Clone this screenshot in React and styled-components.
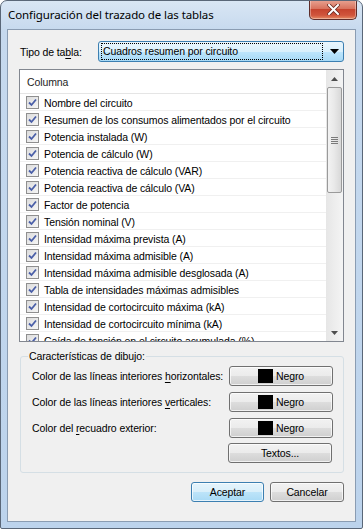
import React from 'react'
import styled, { createGlobalStyle } from 'styled-components'

const GlobalStyle = createGlobalStyle`
    html, body {
        margin: 0;
        padding: 0;
        background: #ffffff;
    }

    body {
        font-family: "Liberation Sans", Arial, sans-serif;
        font-size: 10.5px;
        letter-spacing: -0.1px;
        color: #000000;
    }
`

const Window = styled.div`
    box-sizing: border-box;
    width: 363px;
    height: 529px;
    display: flex;
    flex-direction: column;
    border: 1px solid #5a6778;
    border-radius: 7px 7px 2px 2px;
    background: linear-gradient(180deg, #d9e6f4 0%, #c6d9ee 30px, #bcd3ec 100%);
    overflow: hidden;
`

const TitleBar = styled.div`
    height: 28px;
    flex-shrink: 0;
    display: flex;
    align-items: flex-start;
    justify-content: space-between;
    padding-left: 7px;
    padding-right: 5px;
`

const Title = styled.div`
    font-family: "Noto Sans", "Open Sans", sans-serif;
    font-size: 11.5px;
    letter-spacing: -0.1px;
    line-height: 27px;
    color: #000000;
`

const CloseButton = styled.div`
    width: 46px;
    height: 19px;
    margin-top: -1px;
    border: 1px solid #5e2d2a;
    border-top: none;
    border-radius: 0 0 5px 5px;
    background: linear-gradient(180deg, #e8a493 0%, #d8735e 45%, #c6442e 50%, #d0553c 80%, #e58a63 100%);
    box-shadow: inset 0 0 0 1px rgba(255, 255, 255, 0.35);
    display: flex;
    align-items: center;
    justify-content: center;
`

const Client = styled.div`
    flex: 1;
    margin: 0 6px 6px 6px;
    border: 1px solid #8a9cb2;
    background: #f0f0f0;
    display: flex;
    flex-direction: column;
    padding: 11px 11px 0 11px;
`

const TypeRow = styled.div`
    display: flex;
    align-items: center;
    height: 21px;
    padding-left: 1px;
`

const Label = styled.span`
    width: 78px;
    white-space: nowrap;
`

const Combo = styled.div`
    flex: 1;
    height: 21px;
    box-sizing: border-box;
    border: 1px solid #3c7fb1;
    border-radius: 3px;
    background: linear-gradient(180deg, #eaf6fd 0%, #d9f0fc 50%, #bee6fd 51%, #a7d9f5 100%);
    display: flex;
    align-items: center;
    padding: 0 2px;
`

const ComboText = styled.div`
    flex: 1;
    height: 15px;
    line-height: 15px;
    border: 1px dotted #000000;
    padding-left: 1px;
    margin-right: 4px;
`

const ComboArrow = styled.div`
    width: 14px;
    display: flex;
    justify-content: center;
`

const ListBox = styled.div`
    margin-top: 7px;
    height: 273px;
    flex-shrink: 0;
    box-sizing: border-box;
    border: 1px solid #828790;
    background: #ffffff;
    display: flex;
    overflow: hidden;
`

const ListBody = styled.div`
    flex: 1;
    display: flex;
    flex-direction: column;
    overflow: hidden;
`

const Header = styled.div`
    height: 23px;
    flex-shrink: 0;
    line-height: 25px;
    padding-left: 7px;
    border-bottom: 1px solid #e5e5e5;
    color: #1e1e1e;
`

const Row = styled.div`
    height: 17px;
    flex-shrink: 0;
    box-sizing: border-box;
    display: flex;
    align-items: center;
    border-bottom: 1px solid #f0f0f0;
    padding-left: 6px;
    padding-top: 1px;
`

const Check = styled.span`
    width: 13px;
    height: 13px;
    box-sizing: border-box;
    border: 1px solid #8f8f8f;
    background: linear-gradient(135deg, #dcdcdc 0%, #f6f6f6 100%);
    margin-right: 5px;
    display: flex;
    align-items: center;
    justify-content: center;
    flex-shrink: 0;
`

const RowText = styled.span`
    white-space: nowrap;
`

const ScrollBar = styled.div`
    width: 17px;
    flex-shrink: 0;
    background: linear-gradient(90deg, #e6e6e6 0%, #f4f4f4 100%);
    display: flex;
    flex-direction: column;
    align-items: center;
`

const ScrollArrow = styled.div`
    height: 17px;
    display: flex;
    align-items: center;
    justify-content: center;
`

const Thumb = styled.div`
    width: 15px;
    height: 106px;
    box-sizing: border-box;
    border: 1px solid #9a9a9a;
    border-radius: 2px;
    background: linear-gradient(90deg, #f3f3f3 0%, #e8e8e8 50%, #d8d8d8 100%);
    display: flex;
    align-items: center;
    justify-content: center;
`

const Track = styled.div`
    flex: 1;
`

const Group = styled.fieldset`
    margin: 8px 0 0 1px;
    padding: 3px 10px 9px 7px;
    border: 1px solid #d5dfe5;
    border-radius: 3px;
    display: flex;
    flex-direction: column;
    gap: 5px;
`

const Legend = styled.legend`
    padding: 0 1px;
    margin-left: 0;
    color: #000000;
`

const ColorRow = styled.div`
    height: 21px;
    display: flex;
    align-items: center;
    justify-content: space-between;
    padding-left: 4px;
    white-space: nowrap;
`

const Button = styled.div`
    box-sizing: border-box;
    width: ${(p) => p.$width || 104}px;
    height: 20px;
    border: 1px solid ${(p) => (p.$default ? '#3c7fb1' : '#707070')};
    border-radius: 3px;
    background: ${(p) => (p.$default
        ? 'linear-gradient(180deg, #e5f4fc 0%, #d9effa 50%, #bde4f9 51%, #a9daf5 100%)'
        : 'linear-gradient(180deg, #f2f2f2 0%, #ebebeb 50%, #dddddd 51%, #cfcfcf 100%)')};
    box-shadow: inset 0 0 0 1px rgba(255, 255, 255, 0.7);
    display: flex;
    align-items: center;
    justify-content: center;
    gap: 3px;
`

const Swatch = styled.span`
    width: 15px;
    height: 14px;
    background: #000000;
`

const TextosRow = styled.div`
    display: flex;
    justify-content: flex-end;
    padding-right: 1px;
`

const Footer = styled.div`
    display: flex;
    justify-content: flex-end;
    gap: 6px;
    margin-top: 9px;
`

const U = styled.u`
    text-decoration-thickness: 1px;
    text-underline-offset: 2px;
`

const columns = [
    'Nombre del circuito',
    'Resumen de los consumos alimentados por el circuito',
    'Potencia instalada (W)',
    'Potencia de cálculo (W)',
    'Potencia reactiva de cálculo (VAR)',
    'Potencia reactiva de cálculo (VA)',
    'Factor de potencia',
    'Tensión nominal (V)',
    'Intensidad máxima prevista (A)',
    'Intensidad máxima admisible (A)',
    'Intensidad máxima admisible desglosada (A)',
    'Tabla de intensidades máximas admisibles',
    'Intensidad de cortocircuito máxima (kA)',
    'Intensidad de cortocircuito mínima (kA)',
    'Caída de tensión en el circuito acumulada (%)',
]

const CheckMark = () => (
    <svg width="9" height="9" viewBox="0 0 9 9">
        <path d="M1 4.5 L3.5 7 L8 1.5" fill="none" stroke="#4a5fa8" strokeWidth="1.8" />
    </svg>
)

const Triangle = ({ up }) => (
    <svg width="7" height="4" viewBox="0 0 7 4">
        <path d={up ? 'M0 4 L3.5 0 L7 4 Z' : 'M0 0 L3.5 4 L7 0 Z'} fill="#4d4d4d" />
    </svg>
)

const colorRows = [
    { pre: 'Color de las líneas interiores ', key: 'h', post: 'orizontales:' },
    { pre: 'Color de las líneas interiores ', key: 'v', post: 'erticales:' },
    { pre: 'Color del ', key: 'r', post: 'ecuadro exterior:' },
]

const App = () => (
    <React.Fragment>
        <GlobalStyle />
        <Window>
            <TitleBar>
                <Title>Configuración del trazado de las tablas</Title>
                <CloseButton>
                    <svg width="13" height="11" viewBox="0 0 13 11">
                        <path
                            d="M2 1 L11 10 M11 1 L2 10"
                            stroke="#6b2a20"
                            strokeWidth="3.6"
                            strokeLinecap="square"
                        />
                        <path
                            d="M2 1 L11 10 M11 1 L2 10"
                            stroke="#ffffff"
                            strokeWidth="2"
                            strokeLinecap="square"
                        />
                    </svg>
                </CloseButton>
            </TitleBar>
            <Client>
                <TypeRow>
                    <Label>Tipo de ta<U>b</U>la:</Label>
                    <Combo>
                        <ComboText>Cuadros resumen por circuito</ComboText>
                        <ComboArrow>
                            <svg width="9" height="5" viewBox="0 0 9 5">
                                <path d="M0 0 L4.5 5 L9 0 Z" fill="#000000" />
                            </svg>
                        </ComboArrow>
                    </Combo>
                </TypeRow>
                <ListBox>
                    <ListBody>
                        <Header>Columna</Header>
                        {columns.map((c) => (
                            <Row key={c}>
                                <Check><CheckMark /></Check>
                                <RowText>{c}</RowText>
                            </Row>
                        ))}
                    </ListBody>
                    <ScrollBar>
                        <ScrollArrow><Triangle up /></ScrollArrow>
                        <Thumb>
                            <svg width="7" height="7" viewBox="0 0 7 7">
                                <path d="M0 0.5 H7 M0 2.5 H7 M0 4.5 H7 M0 6.5 H7" stroke="#7a7a7a" strokeWidth="1" />
                            </svg>
                        </Thumb>
                        <Track />
                        <ScrollArrow><Triangle /></ScrollArrow>
                    </ScrollBar>
                </ListBox>
                <Group>
                    <Legend>Características de dibujo:</Legend>
                    {colorRows.map((r) => (
                        <ColorRow key={r.key}>
                            <span>{r.pre}<U>{r.key}</U>{r.post}</span>
                            <Button>
                                <Swatch />
                                <span>Negro</span>
                            </Button>
                        </ColorRow>
                    ))}
                    <TextosRow>
                        <Button>Textos...</Button>
                    </TextosRow>
                </Group>
                <Footer>
                    <Button $width={73} $default>Aceptar</Button>
                    <Button $width={74}>Cancelar</Button>
                </Footer>
            </Client>
        </Window>
    </React.Fragment>
)

export default App
